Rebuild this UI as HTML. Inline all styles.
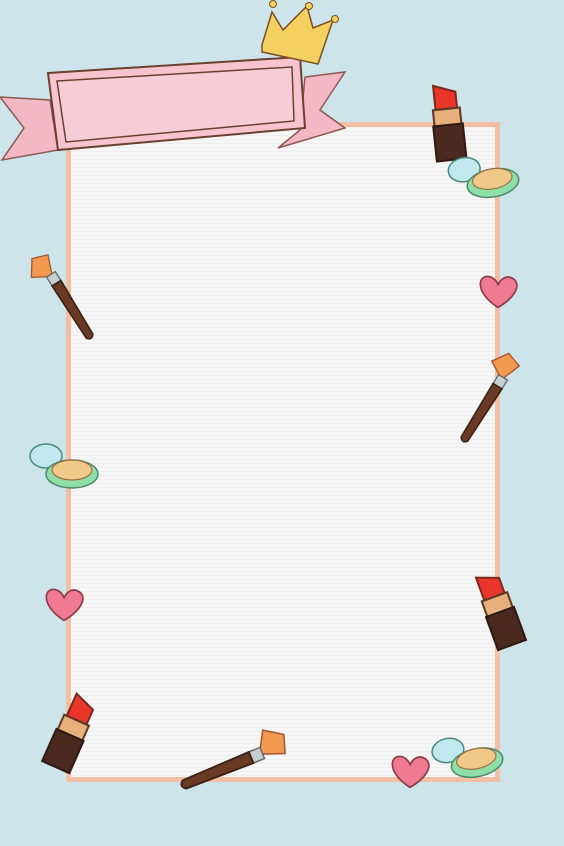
<!DOCTYPE html>
<html><head><meta charset="utf-8"><style>
html,body{margin:0;padding:0;background:#cde4ea;}
svg{display:block}
</style></head><body>
<svg width="564" height="846" viewBox="0 0 564 846" xmlns="http://www.w3.org/2000/svg">
<defs>
<pattern id="lines" width="4" height="4" patternUnits="userSpaceOnUse"><rect width="4" height="4" fill="#f6f6f6"/><rect y="3" width="4" height="1" fill="#eeeeee"/></pattern>
<g id="lip">
 <path d="M-8,-30 L-8,-12 L8,-12 L8,-24 Z" fill="#e9352a" stroke="#7a2a20" stroke-width="1.5"/>
 <rect x="-10" y="-12" width="20" height="12" fill="#e8b07a" stroke="#5a3a25" stroke-width="1.5"/>
 <rect x="-11" y="0" width="22" height="26" fill="#4a2a1e" stroke="#2e1a12" stroke-width="1.5"/>
</g>
<g id="brush">
 <path d="M-14,-22 L0,-14 L6,-30 L-6,-34 Z" fill="#f39a50" stroke="#a0552a" stroke-width="1"/>
 <rect x="-4" y="-16" width="8" height="8" fill="#c8cfd2" stroke="#666" stroke-width="1"/>
 <path d="M-4,-8 L4,-8 L3,40 Q0,44 -3,40 Z" fill="#6b3a25" stroke="#3a2015" stroke-width="1.2"/>
</g>
<g id="compact">
 <ellipse cx="-20" cy="-12" rx="16" ry="12" fill="#bfe8ef" stroke="#4a8a7a" stroke-width="1.5"/>
 <ellipse cx="6" cy="6" rx="26" ry="14" fill="#8edfa8" stroke="#4a8a6a" stroke-width="1.5"/>
 <ellipse cx="6" cy="2" rx="20" ry="10" fill="#f0c88a" stroke="#9a7040" stroke-width="1.2"/>
</g>
<g id="heart">
 <path d="M0,14 C-22,0 -18,-16 -8,-14 C-3,-13 0,-8 0,-6 C2,-12 8,-16 14,-12 C22,-6 14,6 0,14 Z" fill="#f07a90" stroke="#8a3a48" stroke-width="1.5"/>
</g>
</defs>
<rect width="564" height="846" fill="#cde4ea"/>
<rect x="68.5" y="124.5" width="429" height="655" fill="url(#lines)" stroke="#f2bfa5" stroke-width="5"/>
<path d="M0,97 L50,100 L58,150 L2,160 L24,128 Z" fill="#f2b8c6" stroke="#8a5a50" stroke-width="1.5"/>
<path d="M305,77 L345,72 L320,110 L345,128 L278,148 L300,130 Z" fill="#f2b8c6" stroke="#8a5a50" stroke-width="1.5"/>
<path d="M48,73 L300,57 L305,128 L58,150 Z" fill="#f6c3cf" stroke="#6a4030" stroke-width="2"/>
<path d="M57,81 L292,67 L294,121 L66,142 Z" fill="#f8ccd6" stroke="#6a4030" stroke-width="1.5"/>
<path d="M262,45 L272,12 L283,30 L307,6 L313,28 L333,20 L318,64 L262,52 Z" fill="#f4d060" stroke="#7a5020" stroke-width="1.5"/>
<circle cx="273" cy="4" r="3.5" fill="#f4d060" stroke="#7a5020"/>
<circle cx="309" cy="6" r="3.5" fill="#f4d060" stroke="#7a5020"/>
<circle cx="335" cy="19" r="3.5" fill="#f4d060" stroke="#7a5020"/>
<use href="#lip" transform="translate(448,125) rotate(-6) scale(1.35)"/>
<use href="#compact" transform="translate(486,178) rotate(-10)"/>
<use href="#heart" transform="translate(498,292) scale(1.1)"/>
<use href="#brush" transform="translate(62,292) rotate(-32) scale(1.3)"/>
<use href="#brush" transform="translate(492,395) rotate(32) scale(1.3)"/>
<use href="#compact" transform="translate(66,468)"/>
<use href="#heart" transform="translate(64,605) scale(1.1)"/>
<use href="#lip" transform="translate(500,612) rotate(-20) scale(1.35)"/>
<use href="#lip" transform="translate(70,735) rotate(24) scale(1.35)"/>
<use href="#brush" transform="translate(240,762) rotate(68) scale(1.5)"/>
<use href="#heart" transform="translate(410,772) scale(1.1)"/>
<use href="#compact" transform="translate(470,758) rotate(-12)"/>
</svg>
</body></html>
